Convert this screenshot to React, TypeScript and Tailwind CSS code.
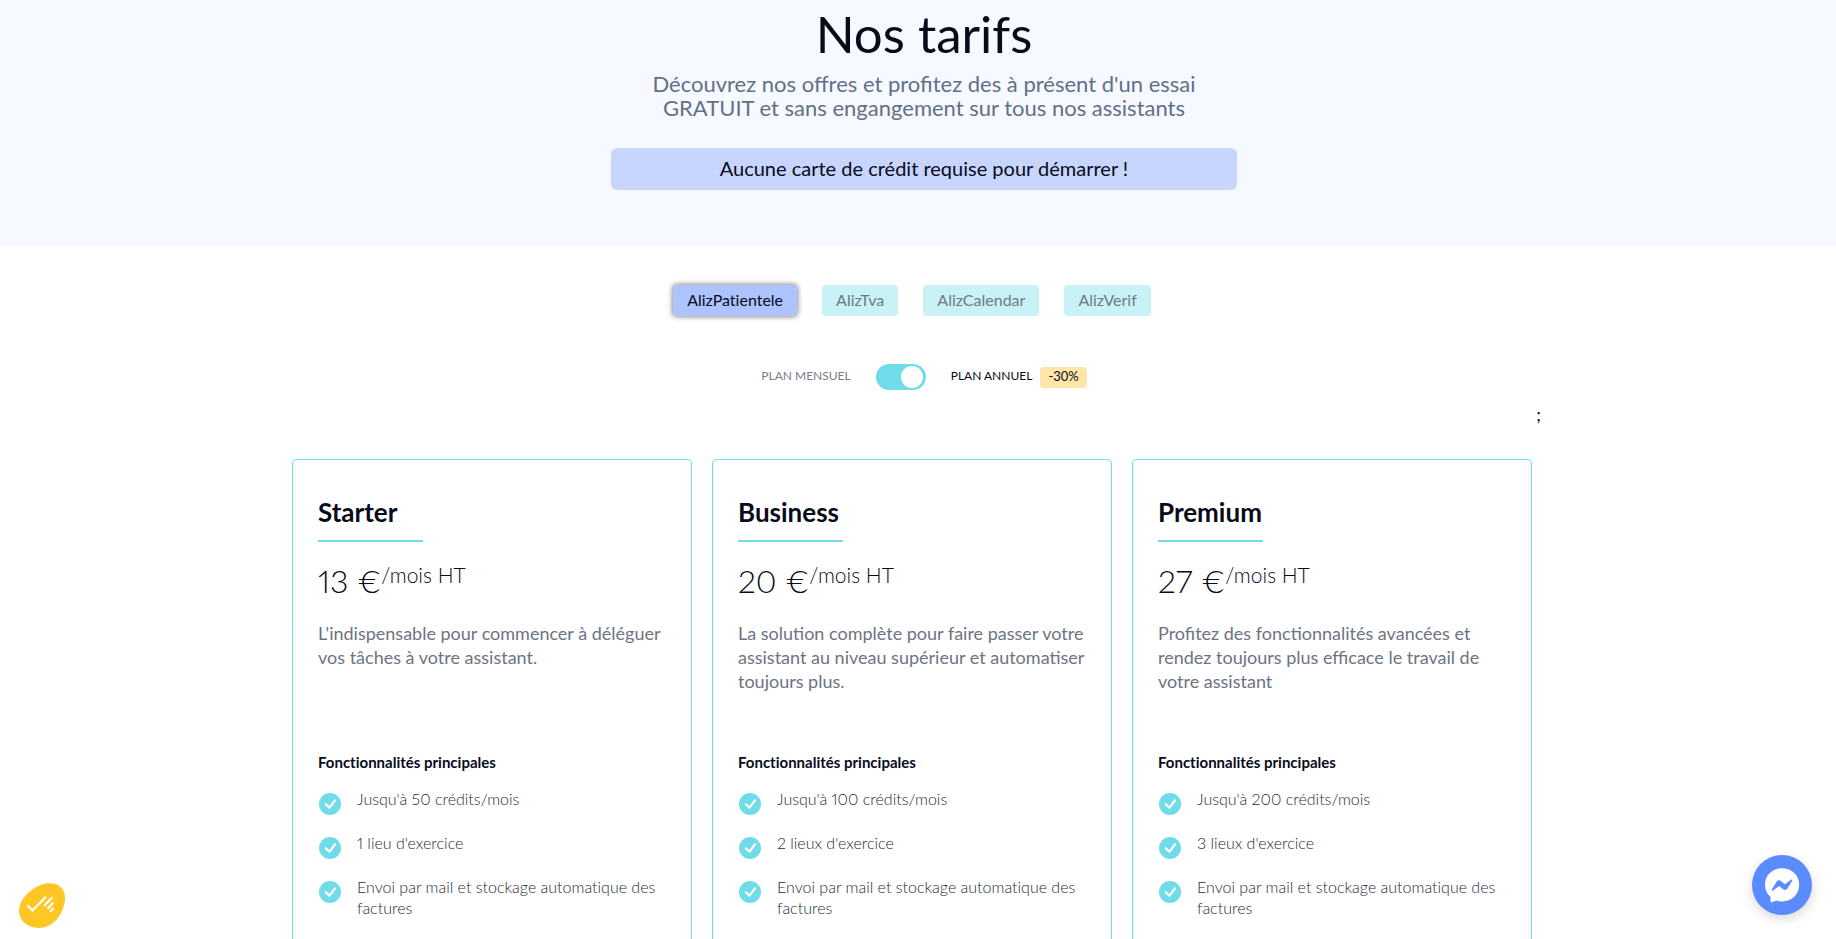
import { useState } from "react";

type Plan = { name: string; price: number; description: string; features: string[] };

const products = ["AlizPatientele", "AlizTva", "AlizCalendar", "AlizVerif"];

const plans: Plan[] = [
  {
    name: "Starter",
    price: 13,
    description: "L'indispensable pour commencer à déléguer vos tâches à votre assistant.",
    features: ["Jusqu'à 50 crédits/mois", "1 lieu d'exercice", "Envoi par mail et stockage automatique des factures"],
  },
  {
    name: "Business",
    price: 20,
    description:
      "La solution complète pour faire passer votre assistant au niveau supérieur et automatiser toujours plus.",
    features: ["Jusqu'à 100 crédits/mois", "2 lieux d'exercice", "Envoi par mail et stockage automatique des factures"],
  },
  {
    name: "Premium",
    price: 27,
    description:
      "Profitez des fonctionnalités avancées et rendez toujours plus efficace le travail de votre assistant",
    features: ["Jusqu'à 200 crédits/mois", "3 lieux d'exercice", "Envoi par mail et stockage automatique des factures"],
  },
];

function CheckBadge() {
  return (
    <svg viewBox="0 0 22 22" className="ml-px h-[22px] w-[22px] shrink-0" aria-hidden="true">
      <circle cx="11" cy="11" r="11" fill="#71dce9" />
      <path d="M6.800 11.200l3.700 3.500 5.500-7.400" fill="none" stroke="#fff" strokeWidth="2.200" strokeLinecap="round" strokeLinejoin="round" />
    </svg>
  );
}

function PlanCard({ plan }: { plan: Plan }) {
  return (
    <article className="rounded border border-[#71dce9] px-[25px] pt-[34px]">
      <h2 className="text-[26px] leading-9 font-bold">{plan.name}</h2>
      <div className="mt-2.5 h-0.5 w-[105px] bg-[#71dce9]" />
      <p className="mt-[15px] flex items-start text-[32px] leading-12 font-light proportional-nums">
        {plan.price} €
        <span className="text-[21px] leading-9">/mois HT</span>
      </p>
      <p className="mt-4 min-h-24 text-lg leading-6 text-[#6d7482]">{plan.description}</p>
      <h3 className="mt-[33px] text-[15px] leading-6 font-bold [font-variant-ligatures:no-common-ligatures]">
        Fonctionnalités principales
      </h3>
      <ul className="mt-3.5 flex flex-col gap-px pb-20 text-base leading-[21px] font-light text-[#252a38] proportional-nums [font-variant-ligatures:no-common-ligatures]">
        {plan.features.map((feature) => (
          <li key={feature} className="flex min-h-[43px] gap-4">
            <span className="pt-[5px]">
              <CheckBadge />
            </span>
            <span>{feature}</span>
          </li>
        ))}
      </ul>
    </article>
  );
}

export default function App() {
  const [product, setProduct] = useState(products[0]);
  const [annual, setAnnual] = useState(true);

  return (
    <div className="min-h-screen bg-white font-['Lato',sans-serif] text-[#070b1a]">
      <header className="flex flex-col items-center bg-[#f6f9ff] pt-1.5 pr-3 pb-[55px] pl-6 text-center">
        <h1 className="text-[51px] leading-[56px]">Nos tarifs</h1>
        <p className="mt-2.5 max-w-[600px] text-[22px] leading-6 text-[#627087]">
          Découvrez nos offres et profitez des à présent d'un essai GRATUIT et sans engangement sur tous nos assistants
        </p>
        <p className="mt-7 w-full max-w-[626px] rounded-md bg-[#c8d6ff] pb-0.5 text-xl leading-10">
          Aucune carte de crédit requise pour démarrer !
        </p>
      </header>

      <main className="mx-auto max-w-[1252px]">
        <div className="mr-3 flex justify-center gap-[25px] pt-10 text-base leading-[29px] [font-variant-ligatures:no-common-ligatures]">
          {products.map((name) => (
            <button
              key={name}
              type="button"
              aria-pressed={product === name}
              onClick={() => setProduct(name)}
              className={
                product === name
                  ? "rounded bg-[#adc4ff] px-3.5 pb-0.5 shadow-[0_0_5px_1px_rgba(0,0,0,0.45)]"
                  : "rounded bg-[#c8f2f6] px-3.5 pb-0.5 text-[#6e7b87]"
              }
            >
              {name}
            </button>
          ))}
        </div>

        <div className="ml-3 flex items-center justify-center pt-12 text-xs">
          <span className="pb-0.5 text-[#777b88]">PLAN MENSUEL</span>
          <label className="relative mx-[25px] block h-[26px] w-[50px] cursor-pointer">
            <input
              type="checkbox"
              role="switch"
              aria-label="Plan annuel"
              checked={annual}
              onChange={(event) => setAnnual(event.target.checked)}
              className="peer h-[26px] w-[50px] appearance-none rounded-full bg-gray-300 checked:bg-[#71dce9]"
            />
            <span className="pointer-events-none absolute top-0.5 left-[3px] h-[22px] w-[22px] rounded-full bg-white peer-checked:left-[25px]" />
          </label>
          <span className="pb-0.5">PLAN ANNUEL</span>
          <span className="ml-2 rounded bg-[#ffe5a8] px-2 pb-0.5 text-[13px] leading-[19px]">-30%</span>
        </div>

        <div className="mt-3 pr-[3px] text-right text-lg leading-6">;</div>

        <section className="mt-[33px] mr-3 grid grid-cols-3 gap-5">
          {plans.map((plan) => (
            <PlanCard key={plan.name} plan={plan} />
          ))}
        </section>
      </main>

      <button type="button" aria-label="Gérer mes cookies" className="fixed bottom-[9px] left-[18px]">
        <svg viewBox="0 0 48 48" className="h-12 w-12" aria-hidden="true">
          <path d="M30 1.200C41 .5 47.500 6.500 47 17 46 32 35 46 21.500 46 10 46 1 39 1 28.500 1 16 17 2 30 1.200z" fill="#ffc726" />
          <path
            d="M9.300 23.300l5.200 5.200L28 14.700M34.300 15.300L26 24M35.300 20.700l-5.800 6M35.300 26.300l-3.200 3.400"
            fill="none"
            stroke="#fff"
            strokeWidth="2.200"
          />
        </svg>
      </button>

      <button
        type="button"
        aria-label="Ouvrir Messenger"
        className="fixed right-6 bottom-6 flex h-[60px] w-[60px] items-center justify-center rounded-full bg-[#5a8bff] shadow-[0_4px_12px_rgba(0,0,0,0.15)]"
      >
        <svg viewBox="0 0 36 36" className="h-9 w-9" aria-hidden="true">
          <path d="M18 1.200C8.200 1.200 1 8.200 1 17.700c0 5 2 9.200 5.500 12.300v4c0 1 .8 1.600 1.800 1.200l3.700-1.700c2 .6 4 .9 6 .9 9.800 0 17.200-7.200 17.200-16.700S27.800 1.200 18 1.200z" fill="#fff" />
          <path d="M7.800 22.500l5-8c.8-1.200 2.400-1.500 3.600-.7l4 3c.4.3.9.3 1.200 0l5.400-4.100c.7-.5 1.700.3 1.200 1.100l-5 8c-.8 1.200-2.400 1.500-3.600.7l-4-3c-.4-.3-.9-.3-1.200 0L9 23.600c-.7.5-1.700-.3-1.200-1.100z" fill="#5a8bff" />
        </svg>
      </button>
    </div>
  );
}
